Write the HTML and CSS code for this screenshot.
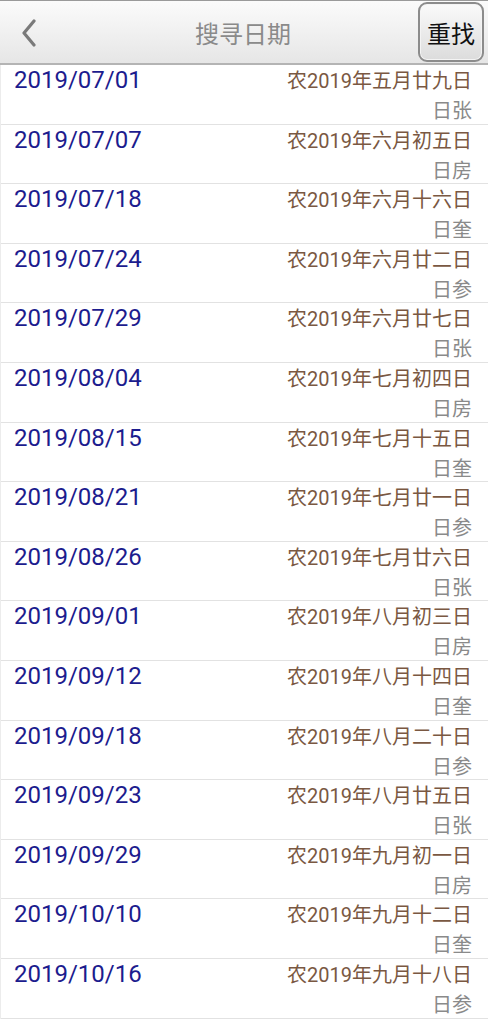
FILE: index.html
```html
<!DOCTYPE html>
<html lang="zh-CN">
<head>
  <meta charset="UTF-8">
  <meta name="viewport" content="width=device-width, initial-scale=1.0">
  <title>搜寻日期</title>
  <link rel="stylesheet" href="styles.css">
</head>
<body>
  <div class="header">
    <div class="back">
      <svg width="16" height="28" viewBox="0 0 16 28">
        <path d="M13 2 L3 14 L13 26" fill="none" stroke="#7a7a7a" stroke-width="3.2" stroke-linecap="round" stroke-linejoin="round"/>
      </svg>
    </div>
    <div class="title">搜寻日期</div>
    <button class="again">重找</button>
  </div>

  <ul class="list">
    <li class="row"><span class="date">2019/07/01</span><div class="lunar"><span>农2019年五月廿九日</span><span class="star">日张</span></div></li>
    <li class="row"><span class="date">2019/07/07</span><div class="lunar"><span>农2019年六月初五日</span><span class="star">日房</span></div></li>
    <li class="row"><span class="date">2019/07/18</span><div class="lunar"><span>农2019年六月十六日</span><span class="star">日奎</span></div></li>
    <li class="row"><span class="date">2019/07/24</span><div class="lunar"><span>农2019年六月廿二日</span><span class="star">日参</span></div></li>
    <li class="row"><span class="date">2019/07/29</span><div class="lunar"><span>农2019年六月廿七日</span><span class="star">日张</span></div></li>
    <li class="row"><span class="date">2019/08/04</span><div class="lunar"><span>农2019年七月初四日</span><span class="star">日房</span></div></li>
    <li class="row"><span class="date">2019/08/15</span><div class="lunar"><span>农2019年七月十五日</span><span class="star">日奎</span></div></li>
    <li class="row"><span class="date">2019/08/21</span><div class="lunar"><span>农2019年七月廿一日</span><span class="star">日参</span></div></li>
    <li class="row"><span class="date">2019/08/26</span><div class="lunar"><span>农2019年七月廿六日</span><span class="star">日张</span></div></li>
    <li class="row"><span class="date">2019/09/01</span><div class="lunar"><span>农2019年八月初三日</span><span class="star">日房</span></div></li>
    <li class="row"><span class="date">2019/09/12</span><div class="lunar"><span>农2019年八月十四日</span><span class="star">日奎</span></div></li>
    <li class="row"><span class="date">2019/09/18</span><div class="lunar"><span>农2019年八月二十日</span><span class="star">日参</span></div></li>
    <li class="row"><span class="date">2019/09/23</span><div class="lunar"><span>农2019年八月廿五日</span><span class="star">日张</span></div></li>
    <li class="row"><span class="date">2019/09/29</span><div class="lunar"><span>农2019年九月初一日</span><span class="star">日房</span></div></li>
    <li class="row"><span class="date">2019/10/10</span><div class="lunar"><span>农2019年九月十二日</span><span class="star">日奎</span></div></li>
    <li class="row"><span class="date">2019/10/16</span><div class="lunar"><span>农2019年九月十八日</span><span class="star">日参</span></div></li>
  </ul>
</body>
</html>
```

FILE: styles.css
```css
body {
  margin: 0;
  background-color: #fff;
  font-family: Roboto, "Noto Sans CJK SC", sans-serif;
}

.header {
  height: 62px;
  display: flex;
  align-items: center;
  border-top: 1px solid #9a9a9a;
  border-bottom: 2px solid #b4b4b4;
  background: linear-gradient(#fbfbfb, #e6e6e6);
}

.back {
  width: 58px;
  display: flex;
  justify-content: center;
  padding-top: 2px;
}

.title {
  flex: 1;
  text-align: center;
  font-size: 24px;
  color: #8a8a8a;
  padding-left: 10px;
}

.again {
  width: 66px;
  height: 60px;
  margin-right: 4px;
  border: 2px solid #8c8c8c;
  border-radius: 9px;
  background: linear-gradient(#fafafa, #dcdcdc);
  box-shadow: inset 0 0 0 1px #f4f4f4;
  font-family: "Noto Sans CJK SC", sans-serif;
  font-size: 24px;
  color: #111;
  padding: 0;
}

.list {
  list-style: none;
  margin: 0;
  padding: 0;
  border-left: 1px solid #ececec;
}

.row {
  height: 58.6px;
  display: flex;
  justify-content: space-between;
  align-items: baseline;
  padding: 0 16px 0 13px;
  border-bottom: 1px solid #e2e2e2;
}

.date {
  font-size: 24px;
  line-height: 30px;
  color: #1c1c8e;
}

.lunar {
  display: flex;
  flex-direction: column;
  align-items: flex-end;
  font-size: 20px;
  line-height: 30px;
  color: #7a5842;
}

.star {
  color: #8a8a8a;
}
```
